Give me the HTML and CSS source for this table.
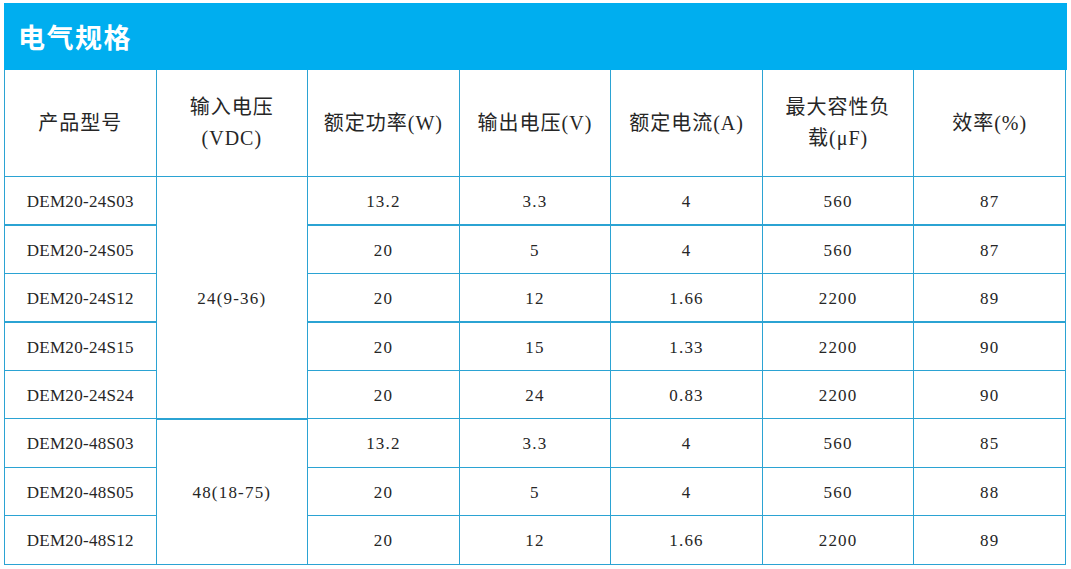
FILE: index.html
```html
<!DOCTYPE html>
<html lang="zh">
<head>
<meta charset="utf-8">
<link rel="stylesheet" href="styles.css">
</head>
<body>
<div class="wrap">
  <div class="title">电气规格</div>
  <table class="spec">
    <thead>
      <tr>
        <th>产品型号</th>
        <th>输入电压<br>(VDC)</th>
        <th>额定功率(W)</th>
        <th>输出电压(V)</th>
        <th>额定电流(A)</th>
        <th>最大容性负<br>载(μF)</th>
        <th>效率(%)</th>
      </tr>
    </thead>
    <tbody>
      <tr class="thick"><td class="m">DEM20-24S03</td><td rowspan="5">24(9-36)</td><td>13.2</td><td>3.3</td><td>4</td><td>560</td><td>87</td></tr>
      <tr><td class="m">DEM20-24S05</td><td>20</td><td>5</td><td>4</td><td>560</td><td>87</td></tr>
      <tr class="thick"><td class="m">DEM20-24S12</td><td>20</td><td>12</td><td>1.66</td><td>2200</td><td>89</td></tr>
      <tr><td class="m">DEM20-24S15</td><td>20</td><td>15</td><td>1.33</td><td>2200</td><td>90</td></tr>
      <tr><td class="m">DEM20-24S24</td><td>20</td><td>24</td><td>0.83</td><td>2200</td><td>90</td></tr>
      <tr><td class="m">DEM20-48S03</td><td rowspan="3">48(18-75)</td><td>13.2</td><td>3.3</td><td>4</td><td>560</td><td>85</td></tr>
      <tr><td class="m">DEM20-48S05</td><td>20</td><td>5</td><td>4</td><td>560</td><td>88</td></tr>
      <tr><td class="m">DEM20-48S12</td><td>20</td><td>12</td><td>1.66</td><td>2200</td><td>89</td></tr>
    </tbody>
  </table>
</div>
</body>
</html>
```

FILE: styles.css
```css
html, body {
  margin: 0;
  padding: 0;
  background: #ffffff;
}

.wrap {
  padding: 3px 4px 0 4px;
  width: 1063px;
}

.title {
  background: #00aeef;
  color: #ffffff;
  height: 67px;
  line-height: 67px;
  padding-left: 14px;
  font-family: "Noto Sans CJK SC", sans-serif;
  font-weight: 700;
  font-size: 27px;
  letter-spacing: 1.5px;
}

.spec {
  width: 1062px;
  table-layout: fixed;
  border-collapse: collapse;
  font-family: "Liberation Serif", "Noto Sans CJK SC", serif;
  color: #262626;
}

.spec th,
.spec td {
  border: 1px solid #2ba3d3;
  text-align: center;
  vertical-align: middle;
  padding: 0;
}

.spec thead tr {
  height: 106px;
}

.spec th {
  font-weight: 400;
  font-size: 20px;
  line-height: 31px;
  letter-spacing: 1px;
  border-top: none;
  padding-top: 1px;
}

.spec tbody tr {
  height: 48.5px;
}

.spec td {
  font-size: 17px;
  letter-spacing: 1.2px;
  padding-top: 3px;
}

.spec td.m {
  letter-spacing: 0.3px;
}

.spec tr.thick td {
  border-bottom-width: 2px;
}
```
